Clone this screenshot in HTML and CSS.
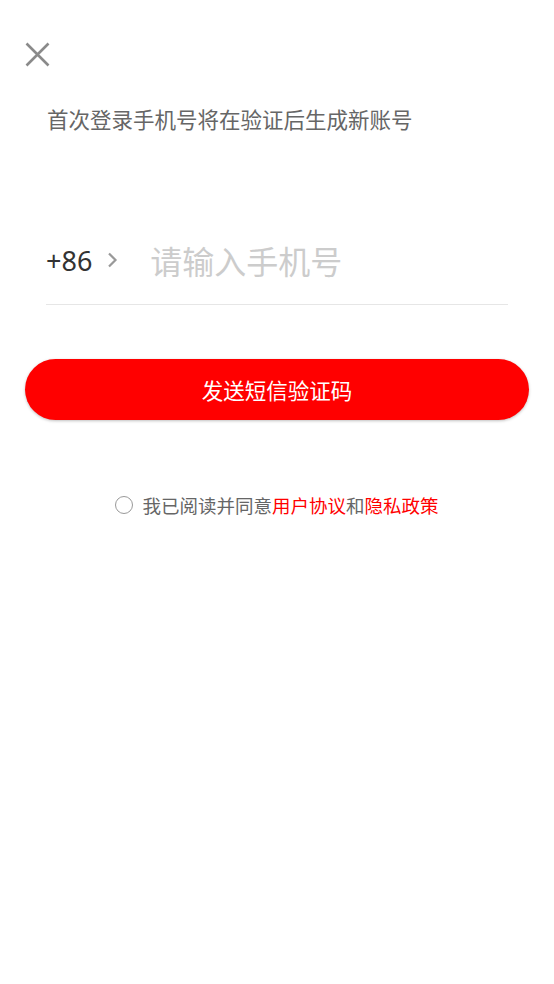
FILE: index.html
```html
<!DOCTYPE html>
<html lang="zh-CN">
<head>
<meta charset="utf-8">
<title>登录</title>
<link rel="stylesheet" href="styles.css">
</head>
<body>
<div class="page">
  <div class="close" aria-label="关闭">
    <svg width="25" height="25" viewBox="0 0 25 25"><path d="M1.5 1.5 L23.5 23.5 M23.5 1.5 L1.5 23.5" stroke="#8a8a8a" stroke-width="2.6" stroke-linecap="butt" fill="none"/></svg>
  </div>
  <p class="tip">首次登录手机号将在验证后生成新账号</p>
  <div class="phone-row">
    <span class="code">+86</span>
    <svg class="chev" width="11" height="16" viewBox="0 0 11 16"><path d="M2 1.5 L8.5 8 L2 14.5" stroke="#999" stroke-width="2.2" fill="none"/></svg>
    <input class="phone" type="tel" placeholder="请输入手机号">
  </div>
  <button class="send">发送短信验证码</button>
  <div class="agree">
    <span class="radio"></span>
    <span class="agree-text">我已阅读并同意<span class="link">用户协议</span>和<span class="link">隐私政策</span></span>
  </div>
</div>
</body>
</html>
```
FILE: styles.css
```css
html, body {
  margin: 0;
  padding: 0;
  background: #fff;
}
body {
  font-family: "Noto Sans", "Noto Sans CJK SC", sans-serif;
  width: 554px;
  height: 984px;
  overflow: hidden;
}
.page {
  display: flex;
  flex-direction: column;
  padding: 42px 25px 0 25px;
}
.close {
  width: 25px;
  height: 25px;
  display: flex;
}
.tip {
  margin: 38px 0 0 22px;
  font-size: 21.5px;
  line-height: 30px;
  color: #666;
}
.phone-row {
  margin: 95px 21px 0 21px;
  height: 60px;
  padding-bottom: 14px;
  border-bottom: 1px solid #e6e6e6;
  display: flex;
  align-items: center;
}
.code {
  font-size: 27px;
  color: #333;
  line-height: 1;
}
.chev {
  margin-left: 15px;
}
.phone {
  margin-left: 32px;
  border: none;
  outline: none;
  padding: 0;
  flex: 1;
  min-width: 0;
  font-family: "Noto Sans CJK SC", sans-serif;
  font-size: 32px;
  color: #333;
  background: transparent;
}
.phone::placeholder {
  color: #cccccc;
}
.send {
  margin-top: 54px;
  height: 61px;
  border: none;
  border-radius: 31px;
  background: #ff0000;
  color: #fff;
  font-family: "Noto Sans CJK SC", sans-serif;
  font-size: 21.5px;
  box-shadow: 0 1px 3px rgba(0,0,0,0.25);
  padding: 0;
}
.agree {
  margin-top: 73px;
  display: flex;
  align-items: center;
  justify-content: center;
  line-height: 24px;
}
.radio {
  flex: none;
  width: 16px;
  height: 16px;
  border: 1.6px solid #999;
  border-radius: 50%;
}
.agree-text {
  margin-left: 9px;
  font-family: "Noto Sans CJK SC", sans-serif;
  font-size: 18.5px;
  color: #666;
}
.link {
  color: #ff0000;
}
```
